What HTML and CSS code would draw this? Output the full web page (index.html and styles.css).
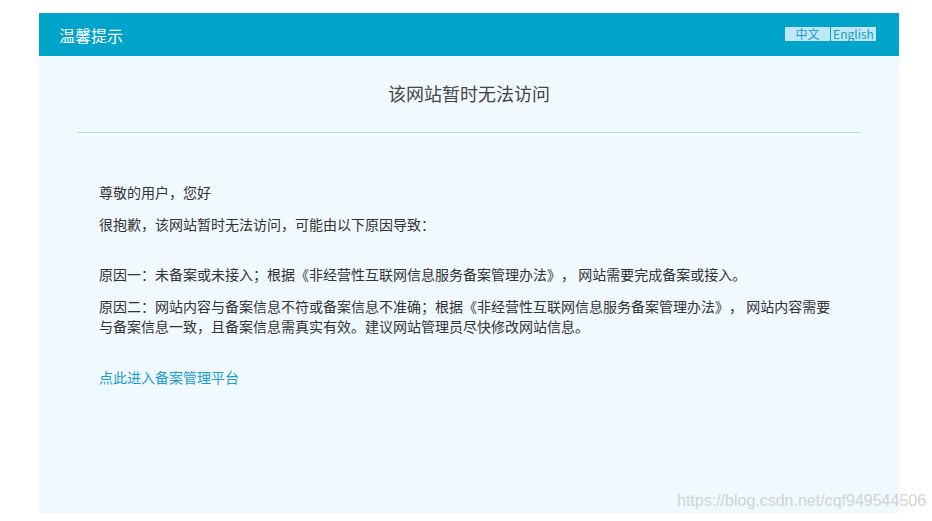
FILE: index.html
```html
<!DOCTYPE html>
<html>
	<head>
		<meta charset="utf-8">
		<meta name="viewport" content="width=device-width, initial-scale=1">
		<title>温馨提示</title>
		<link rel="stylesheet" href="styles.css">
	</head>
	<body>
		<div class="wrap">
			<div class="top">
				<span class="top-title">温馨提示</span>
				<div class="lang">
					<span class="lang-item">中文</span>
					<span class="lang-item">English</span>
				</div>
			</div>
			<div class="main">
				<h2 class="main-title">该网站暂时无法访问</h2>
				<div class="main-body">
					<p>尊敬的用户，您好</p>
					<p>很抱歉，该网站暂时无法访问，可能由以下原因导致：</p>
					<p class="reason">原因一：未备案或未接入；根据《非经营性互联网信息服务备案管理办法》， 网站需要完成备案或接入。</p>
					<p>原因二：网站内容与备案信息不符或备案信息不准确；根据《非经营性互联网信息服务备案管理办法》， 网站内容需要与备案信息一致，且备案信息需真实有效。建议网站管理员尽快修改网站信息。</p>
					<p class="link-row"><a class="link" href="#">点此进入备案管理平台</a></p>
				</div>
			</div>
		</div>
		<div class="watermark">https://blog.csdn.net/cqf949544506</div>
	</body>
</html>
```

FILE: styles.css
```css
body{
	margin: 0;
	background: #fff;
	font-family: "Noto Sans CJK SC", "Microsoft YaHei", sans-serif;
}
.wrap{
	width: 860px;
	margin: 13px 0 0 39px;
}
.top{
	height: 43px;
	background: #00a3c9;
	display: flex;
	align-items: center;
	justify-content: space-between;
	padding: 0 23px 0 20px;
}
.top-title{
	color: #fff;
	font-size: 16px;
	line-height: 20px;
}
.lang{
	display: flex;
	gap: 1px;
	margin-top: -1px;
}
.lang-item{
	background: #c0e7f5;
	color: #179ccb;
	font-size: 12px;
	line-height: 14px;
	height: 14px;
	padding: 0 2px;
	min-width: 41px;
	text-align: center;
	font-family: "Noto Sans CJK SC", "Open Sans", sans-serif;
}
.main{
	background: #eff9fe;
	min-height: 457px;
	padding-top: 25px;
	box-sizing: border-box;
}
.main-title{
	margin: 0 38px;
	font-size: 18px;
	line-height: 24px;
	font-weight: normal;
	color: #444;
	text-align: center;
	padding-bottom: 27px;
	border-bottom: 1px solid #b5dce8;
}
.main-body{
	width: 740px;
	padding: 49px 60px 0;
	font-size: 14px;
	line-height: 20px;
	color: #333;
	text-spacing-trim: space-all;
}
.main-body p{
	margin: 0 0 12px;
}
.main-body .reason{
	margin-top: 30px;
}
.main-body .link-row{
	margin-top: 31px;
}
.link{
	color: #1e9bd4;
	text-decoration: none;
}
.watermark{
	position: absolute;
	left: 677px;
	top: 492px;
	font-family: "Liberation Sans", Arial, sans-serif;
	font-size: 16px;
	color: rgba(200, 200, 200, 0.8);
}
```
